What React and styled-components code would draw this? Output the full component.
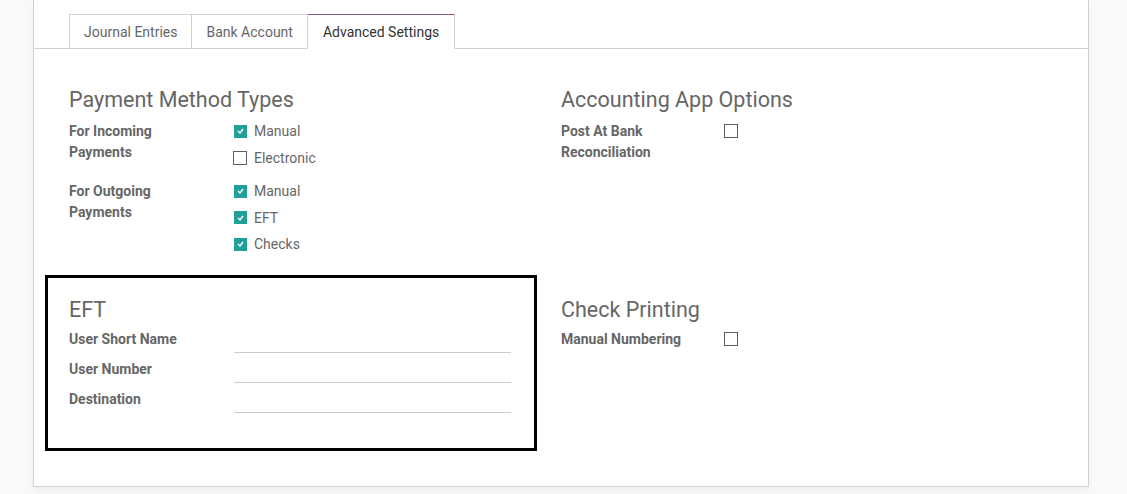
import React from "react";
import styled, { createGlobalStyle } from "styled-components";

const Global = createGlobalStyle`
  html, body { margin: 0; padding: 0; }
  body {
    background: #f9f9f9;
    font-family: Roboto, "Noto Sans", Arial, sans-serif;
    font-size: 13px;
    color: #666666;
  }
`;

const Page = styled.div`
  height: 494px;
  overflow: hidden;
`;

const Sheet = styled.div`
  margin-left: 33px;
  width: 1054px;
  height: 486px;
  background: #ffffff;
  border: 1px solid #ccd2d9;
  border-top: none;
  box-shadow: 0 4px 6px rgba(0, 0, 0, 0.04);
`;

const TabBar = styled.div`
  display: flex;
  padding: 14px 0 0 35px;
  border-bottom: 1px solid #ccd2d9;
`;

const Tab = styled.div`
  height: 33px;
  padding: 0 ${(p) => (p.$active ? "15px" : "14px")};
  display: flex;
  align-items: center;
  font-size: 14px;
  color: ${(p) => (p.$active ? "#333333" : "#666666")};
  border: 1px solid #ccd2d9;
  border-top-color: ${(p) => (p.$active ? "#875a7b" : "#ccd2d9")};
  border-left-width: ${(p) => (p.$first ? "1px" : "0")};
  background: #ffffff;
  margin-bottom: -1px;
  border-bottom-color: ${(p) => (p.$active ? "#ffffff" : "#ccd2d9")};
`;

const Body = styled.div`
  display: grid;
  grid-template-columns: 492px 492px;
  row-gap: 14px;
  padding: 18px 0 0 11px;
`;

const Group = styled.div`
  border: 3px solid ${(p) => (p.$highlight ? "#000000" : "transparent")};
  padding: ${(p) => p.$pt || 18}px 23px ${(p) => (p.$highlight ? "35px" : "0")} 21px;
`;

const Heading = styled.div`
  font-size: 21.5px;
  line-height: 24px;
  color: #666666;
  margin-bottom: ${(p) => p.$mb ?? 6}px;
`;

const Field = styled.div`
  display: grid;
  grid-template-columns: ${(p) => p.$lw || 165}px 1fr;
  margin-bottom: ${(p) => p.$gap || 0}px;
`;

const Label = styled.div`
  font-weight: 700;
  font-size: 14px;
  line-height: 21px;
  color: #666666;
  padding-top: ${(p) => p.$pt || 2.5}px;
`;

const Options = styled.div`
  display: flex;
  flex-direction: column;
`;

const CheckItem = styled.label`
  height: ${(p) => p.$h || 26.5}px;
  display: flex;
  align-items: center;
  gap: 7px;
  font-size: 14px;
  color: #666666;
`;

const Box = styled.span`
  box-sizing: border-box;
  width: ${(p) => (p.$checked ? "13px" : "14px")};
  height: ${(p) => (p.$checked ? "13px" : "14px")};
  margin-left: ${(p) => (p.$checked ? "0" : "-1px")};
  background: ${(p) => (p.$checked ? "#21a09a" : "#ffffff")};
  border: ${(p) => (p.$checked ? "none" : "1px solid #5f5f5f")};
  display: inline-flex;
  align-items: center;
  justify-content: center;
`;

const Input = styled.div`
  height: 29px;
  border-bottom: 1px solid #cccccc;
`;

const InputRow = styled.div`
  display: grid;
  grid-template-columns: ${(p) => p.$lw || 165}px 1fr;
  height: 30px;
`;

function Checkbox({ checked }) {
  return (
    <Box $checked={checked}>
      {checked && (
        <svg width="7" height="6" viewBox="0 0 7 6">
          <polyline points="1,3 3,5 6,1" fill="none" stroke="#ffffff" strokeWidth="1.4" />
        </svg>
      )}
    </Box>
  );
}

function Opt({ checked, children }) {
  return (
    <CheckItem>
      <Checkbox checked={checked} />
      {children}
    </CheckItem>
  );
}

export default function App() {
  return (
    <Page>
      <Global />
      <Sheet>
        <TabBar>
          <Tab $first>Journal Entries</Tab>
          <Tab>Bank Account</Tab>
          <Tab $active>Advanced Settings</Tab>
        </TabBar>
        <Body>
          <Group>
            <Heading>Payment Method Types</Heading>
            <Field $gap={7}>
              <Label>For Incoming<br />Payments</Label>
              <Options>
                <Opt checked>Manual</Opt>
                <Opt>Electronic</Opt>
              </Options>
            </Field>
            <Field>
              <Label>For Outgoing<br />Payments</Label>
              <Options>
                <Opt checked>Manual</Opt>
                <Opt checked>EFT</Opt>
                <Opt checked>Checks</Opt>
              </Options>
            </Field>
          </Group>
          <Group>
            <Heading>Accounting App Options</Heading>
            <Field $lw={164}>
              <Label>Post At Bank<br />Reconciliation</Label>
              <Options>
                <CheckItem><Checkbox /></CheckItem>
              </Options>
            </Field>
          </Group>
          <Group $highlight $pt={20}>
            <Heading $mb={1}>EFT</Heading>
            <InputRow>
              <Label $pt={6.5}>User Short Name</Label>
              <Input />
            </InputRow>
            <InputRow>
              <Label $pt={6.5}>User Number</Label>
              <Input />
            </InputRow>
            <InputRow>
              <Label $pt={6.5}>Destination</Label>
              <Input />
            </InputRow>
          </Group>
          <Group $pt={20}>
            <Heading $mb={1}>Check Printing</Heading>
            <InputRow $lw={164}>
              <Label $pt={6.5}>Manual Numbering</Label>
              <CheckItem $h={33}><Checkbox /></CheckItem>
            </InputRow>
          </Group>
        </Body>
      </Sheet>
    </Page>
  );
}
